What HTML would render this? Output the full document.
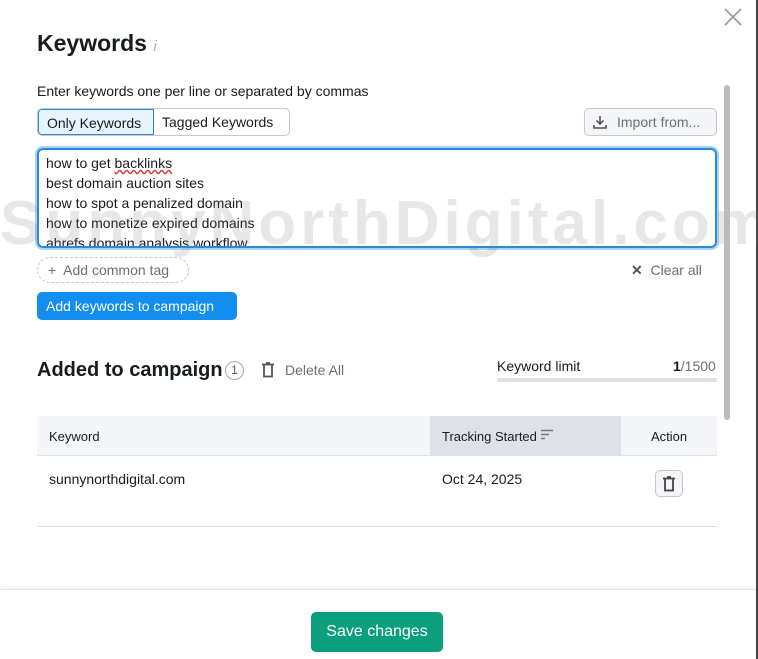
<!DOCTYPE html>
<html><head><meta charset="utf-8"><style>
*{box-sizing:border-box;margin:0;padding:0}
body{width:758px;height:659px;background:#fff;font-family:"Liberation Sans",sans-serif;color:#191b23;position:relative;overflow:hidden}
.a{position:absolute}
.t14{font-size:14px}
</style></head><body>
<div class="a" style="right:0;top:0;width:2px;height:659px;background:#444"></div>
<svg class="a" style="left:723px;top:7px" width="20" height="20" viewBox="0 0 20 20"><path d="M2 2L18 18M18 2L2 18" stroke="#999" stroke-width="1.6"/></svg>
<div class="a" style="left:37px;top:30px;font-size:23px;font-weight:bold">Keywords <span style="font-size:15px;color:#aaa;font-style:italic;font-weight:normal">i</span></div>
<div class="a t14" style="left:37px;top:83px">Enter keywords one per line or separated by commas</div>
<div class="a" style="left:37px;top:108px;width:253px;height:28px;border:1px solid #c5c7cd;border-radius:5px;overflow:hidden;display:flex;font-size:14px">
<div style="width:116px;background:#e6f4fd;border:1px solid #2b8ad8;border-radius:4px 0 0 4px;padding:5px 0 0 8px">Only Keywords</div>
<div style="padding:5px 0 0 8px">Tagged Keywords</div></div>
<div class="a t14" style="left:584px;top:108px;width:133px;height:28px;border:1px solid #c5c7cd;border-radius:5px;background:#f4f5f9;color:#6c6e79;padding:5px 0 0 32px">Import from...</div>
<svg class="a" style="left:592px;top:114px" width="16" height="16" viewBox="0 0 16 16"><path d="M8 2v8M4.5 6.5L8 10l3.5-3.5M2 11v3h12v-3" stroke="#555" stroke-width="1.6" fill="none"/></svg>
<div class="a t14" style="left:37px;top:148px;width:680px;height:100px;border:2px solid #2b8ad8;border-radius:6px;box-shadow:0 0 0 2px #a8d3f5;padding:3px 0 0 7px;line-height:20px;overflow:hidden">how to get <span style="text-decoration:underline wavy #d33">backlinks</span><br>best domain auction sites<br>how to spot a penalized domain<br>how to monetize expired domains<br>ahrefs domain analysis workflow</div>
<div class="a" style="left:0;top:188px;font-size:62px;font-weight:bold;color:rgba(120,120,120,0.18);letter-spacing:4px;white-space:nowrap">SunnyNorthDigital.com</div>
<div class="a t14" style="left:37px;top:257px;width:152px;height:26px;border:1px dashed #c5c7cd;border-radius:13px;color:#6c6e79;padding:4px 0 0 10px">+&nbsp; Add common tag</div>
<div class="a t14" style="left:631px;top:262px;color:#6c6e79"><b style="color:#555">✕</b>&nbsp; Clear all</div>
<div class="a t14" style="left:37px;top:292px;width:200px;height:28px;background:#118ef0;border-radius:5px;color:#fff;padding:6px 0 0 9px">Add keywords to campaign</div>
<div class="a" style="left:724px;top:85px;width:6px;height:335px;background:#bbb;border-radius:3px"></div>
<div class="a" style="left:37px;top:359px;font-size:20px;font-weight:bold">Added to campaign</div>
<div class="a" style="left:225px;top:361px;width:19px;height:19px;border:1px solid #aaa;border-radius:50%;font-size:12px;text-align:center;line-height:17px;color:#555">1</div>
<svg class="a" style="left:261px;top:362px" width="14" height="16" viewBox="0 0 14 16"><path d="M1 2.5h12M5 1h4M3 2.5v12h8v-12" stroke="#555" stroke-width="1.8" fill="none"/></svg>
<div class="a t14" style="left:285px;top:362px;color:#6c6e79">Delete All</div>
<div class="a t14" style="left:497px;top:358px">Keyword limit</div>
<div class="a t14" style="left:673px;top:358px;color:#6c6e79"><b style="color:#191b23">1</b>/1500</div>
<div class="a" style="left:497px;top:378px;width:220px;height:4px;background:#dfe0e5;border-radius:2px"></div>
<div class="a" style="left:37px;top:416px;width:680px;height:40px;background:#f4f5f9;border-bottom:1px solid #e0e1e6"></div>
<div class="a" style="left:430px;top:416px;width:191px;height:40px;background:#e0e1e8"></div>
<div class="a" style="left:49px;top:429px;font-size:13px">Keyword</div>
<div class="a" style="left:442px;top:429px;font-size:13px">Tracking Started</div>
<svg class="a" style="left:540px;top:429px" width="14" height="12" viewBox="0 0 14 12"><path d="M1 1.5h12M1 5.5h8M1 9.5h4" stroke="#777" stroke-width="1.5"/></svg>
<div class="a" style="left:651px;top:429px;font-size:13px">Action</div>
<div class="a t14" style="left:49px;top:471px">sunnynorthdigital.com</div>
<div class="a t14" style="left:442px;top:471px">Oct 24, 2025</div>
<div class="a" style="left:655px;top:470px;width:28px;height:27px;border:1px solid #c5c7cd;border-radius:5px;background:#f4f5f9"></div>
<svg class="a" style="left:662px;top:476px" width="14" height="16" viewBox="0 0 14 16"><path d="M1 2.5h12M5 1h4M3 2.5v12h8v-12" stroke="#444" stroke-width="1.8" fill="none"/></svg>
<div class="a" style="left:37px;top:526px;width:680px;height:1px;background:#e0e1e6"></div>
<div class="a" style="left:0;top:589px;width:756px;height:70px;border-top:1px solid #e6e7ea;box-shadow:0 -2px 4px rgba(0,0,0,0.05);background:#fff"></div>
<div class="a" style="left:311px;top:612px;width:132px;height:40px;background:#0c9f7e;border-radius:5px;color:#fff;font-size:16px;text-align:center;line-height:40px">Save changes</div>
</body></html>
